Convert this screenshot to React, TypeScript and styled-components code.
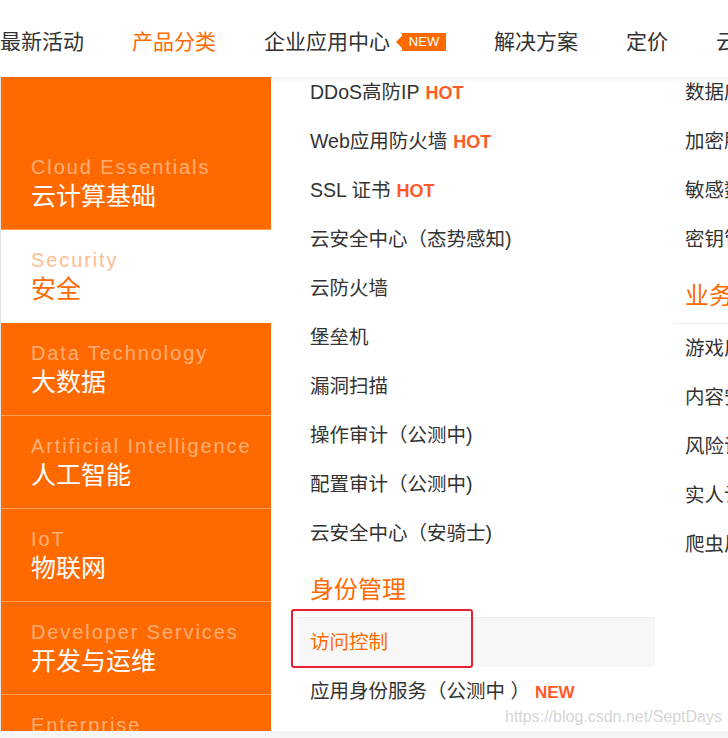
import { createGlobalStyle, styled } from "styled-components";

const ORANGE = "#ff6a00";

const GlobalStyle = createGlobalStyle`
    html, body {
        margin: 0;
        padding: 0;
        background: #f5f5f5;
        overflow: hidden;
    }
    body {
        font-family: "Liberation Sans", "Noto Sans CJK SC", Arial, sans-serif;
        color: #333;
    }
`;

const navItems = ["最新活动", "产品分类", "企业应用中心", "解决方案", "定价", "云栖社区"];

const categories = [
    { en: "Cloud Essentials", zh: "云计算基础" },
    { en: "Security", zh: "安全", active: true },
    { en: "Data Technology", zh: "大数据" },
    { en: "Artificial Intelligence", zh: "人工智能" },
    { en: "IoT", zh: "物联网" },
    { en: "Developer Services", zh: "开发与运维" },
    { en: "Enterprise", zh: "企业应用" },
];

const securityItems: { name: string; tag?: string }[] = [
    { name: "DDoS高防IP", tag: "HOT" },
    { name: "Web应用防火墙", tag: "HOT" },
    { name: "SSL 证书", tag: "HOT" },
    { name: "云安全中心（态势感知)" },
    { name: "云防火墙" },
    { name: "堡垒机" },
    { name: "漏洞扫描" },
    { name: "操作审计（公测中)" },
    { name: "配置审计（公测中)" },
    { name: "云安全中心（安骑士)" },
];

const dataItems = ["数据库审计", "加密服务", "敏感数据保护", "密钥管理服务"];
const bizItems = ["游戏盾", "内容安全", "风险识别", "实人认证", "爬虫风险管理"];

const App = () => {
    return (
        <Page>
            <GlobalStyle />
            <TopNav>
                {navItems.map((item) => (
                    <NavItem key={item} $active={item === "产品分类"}>
                        {item}
                        {item === "企业应用中心" && <NewBadge>NEW</NewBadge>}
                    </NavItem>
                ))}
            </TopNav>
            <Dropdown>
                <Sidebar>
                    {categories.map((c) => (
                        <Category key={c.en} $active={!!c.active}>
                            <CategoryEn>{c.en}</CategoryEn>
                            <CategoryZh>{c.zh}</CategoryZh>
                        </Category>
                    ))}
                </Sidebar>
                <Content>
                    <Column $width={357}>
                        {securityItems.map((item) => (
                            <Row key={item.name}>
                                {item.name}
                                {item.tag && <Tag>{item.tag}</Tag>}
                            </Row>
                        ))}
                        <Heading>身份管理</Heading>
                        <Row $active>
                            访问控制
                            <Annotation />
                        </Row>
                        <Row>
                            应用身份服务（公测中 ）
                            <Tag $wide>NEW</Tag>
                        </Row>
                    </Column>
                    <Column $width={220}>
                        {dataItems.map((item) => (
                            <Row key={item}>{item}</Row>
                        ))}
                        <Heading>业务安全</Heading>
                        {bizItems.map((item) => (
                            <Row key={item}>{item}</Row>
                        ))}
                    </Column>
                </Content>
            </Dropdown>
            <Watermark>https://blog.csdn.net/SeptDays</Watermark>
        </Page>
    );
};

export default App;

const Page = styled.div`
    position: relative;
    width: 728px;
    height: 738px;
    overflow: hidden;
`;

const TopNav = styled.nav`
    display: flex;
    align-items: center;
    gap: 48px;
    height: 77px;
    padding-top: 7px;
    box-sizing: border-box;
    background: #fff;
    white-space: nowrap;
`;

const NavItem = styled.span<{ $active?: boolean }>`
    display: inline-flex;
    align-items: center;
    flex-shrink: 0;
    font-size: 21px;
    line-height: 30px;
    color: ${(p) => (p.$active ? ORANGE : "#333")};
    cursor: pointer;
`;

const NewBadge = styled.span`
    position: relative;
    display: inline-flex;
    align-items: center;
    justify-content: center;
    width: 44px;
    height: 18px;
    margin-left: 12px;
    background: ${ORANGE};
    color: #fff;
    font-size: 13px;
    font-family: "Liberation Sans", Arial, sans-serif;
    &::before {
        content: "";
        position: absolute;
        left: -6px;
        top: 3px;
        border-top: 6px solid transparent;
        border-bottom: 6px solid transparent;
        border-right: 6px solid ${ORANGE};
    }
`;

const Dropdown = styled.div`
    display: flex;
    height: 654px;
    background: #fff;
    overflow: hidden;
`;

const Sidebar = styled.aside`
    flex-shrink: 0;
    width: 270px;
    padding-top: 60px;
    background: ${ORANGE};
    border-left: 1px solid #dfe3ea;
`;

const Category = styled.div<{ $active: boolean }>`
    height: 93px;
    box-sizing: border-box;
    padding: 18px 0 0 30px;
    background: ${(p) => (p.$active ? "#fff" : "transparent")};
    border-bottom: 1px solid ${(p) => (p.$active ? "transparent" : "rgba(255, 255, 255, 0.35)")};
    white-space: nowrap;
    cursor: pointer;
    color: ${(p) => (p.$active ? ORANGE : "#fff")};
`;

const CategoryEn = styled.div`
    font-size: 20px;
    line-height: 24px;
    letter-spacing: 1.9px;
    opacity: 0.45;
`;

const CategoryZh = styled.div`
    font-size: 25px;
    line-height: 34px;
`;

const Content = styled.div`
    flex: 1;
    display: flex;
    gap: 18px;
    padding-left: 27px;
    box-shadow: inset 0 5px 5px -3px rgba(0, 0, 0, 0.07);
`;

const Column = styled.div<{ $width: number }>`
    flex-shrink: 0;
    width: ${(p) => p.$width}px;
    margin-top: -9px;
`;

const Row = styled.div<{ $active?: boolean }>`
    position: relative;
    display: flex;
    align-items: baseline;
    height: 49px;
    line-height: 49px;
    padding-left: 12px;
    font-size: 19.5px;
    white-space: nowrap;
    color: ${(p) => (p.$active ? ORANGE : "#333")};
    background: ${(p) => (p.$active ? "#f7f7f7" : "transparent")};
    cursor: pointer;
`;

const Tag = styled.span<{ $wide?: boolean }>`
    margin-left: ${(p) => (p.$wide ? "5px" : "6px")};
    font-family: "Liberation Sans", Arial, sans-serif;
    font-size: ${(p) => (p.$wide ? "17px" : "18px")};
    font-weight: bold;
    color: #ff5a26;
`;

const Heading = styled.div`
    padding: 17px 0 12px 12px;
    font-size: 24px;
    line-height: 30px;
    color: ${ORANGE};
    border-bottom: 1px solid #eee;
    white-space: nowrap;
`;

const Annotation = styled.span`
    position: absolute;
    left: -7px;
    top: -9px;
    width: 182px;
    height: 59px;
    box-sizing: border-box;
    border: 2px solid #e8212f;
    border-radius: 3px;
    pointer-events: none;
`;

const Watermark = styled.div`
    position: absolute;
    left: 505px;
    top: 708px;
    font-family: "Liberation Sans", Arial, sans-serif;
    font-size: 16px;
    color: #d6d6d6;
    white-space: nowrap;
`;
